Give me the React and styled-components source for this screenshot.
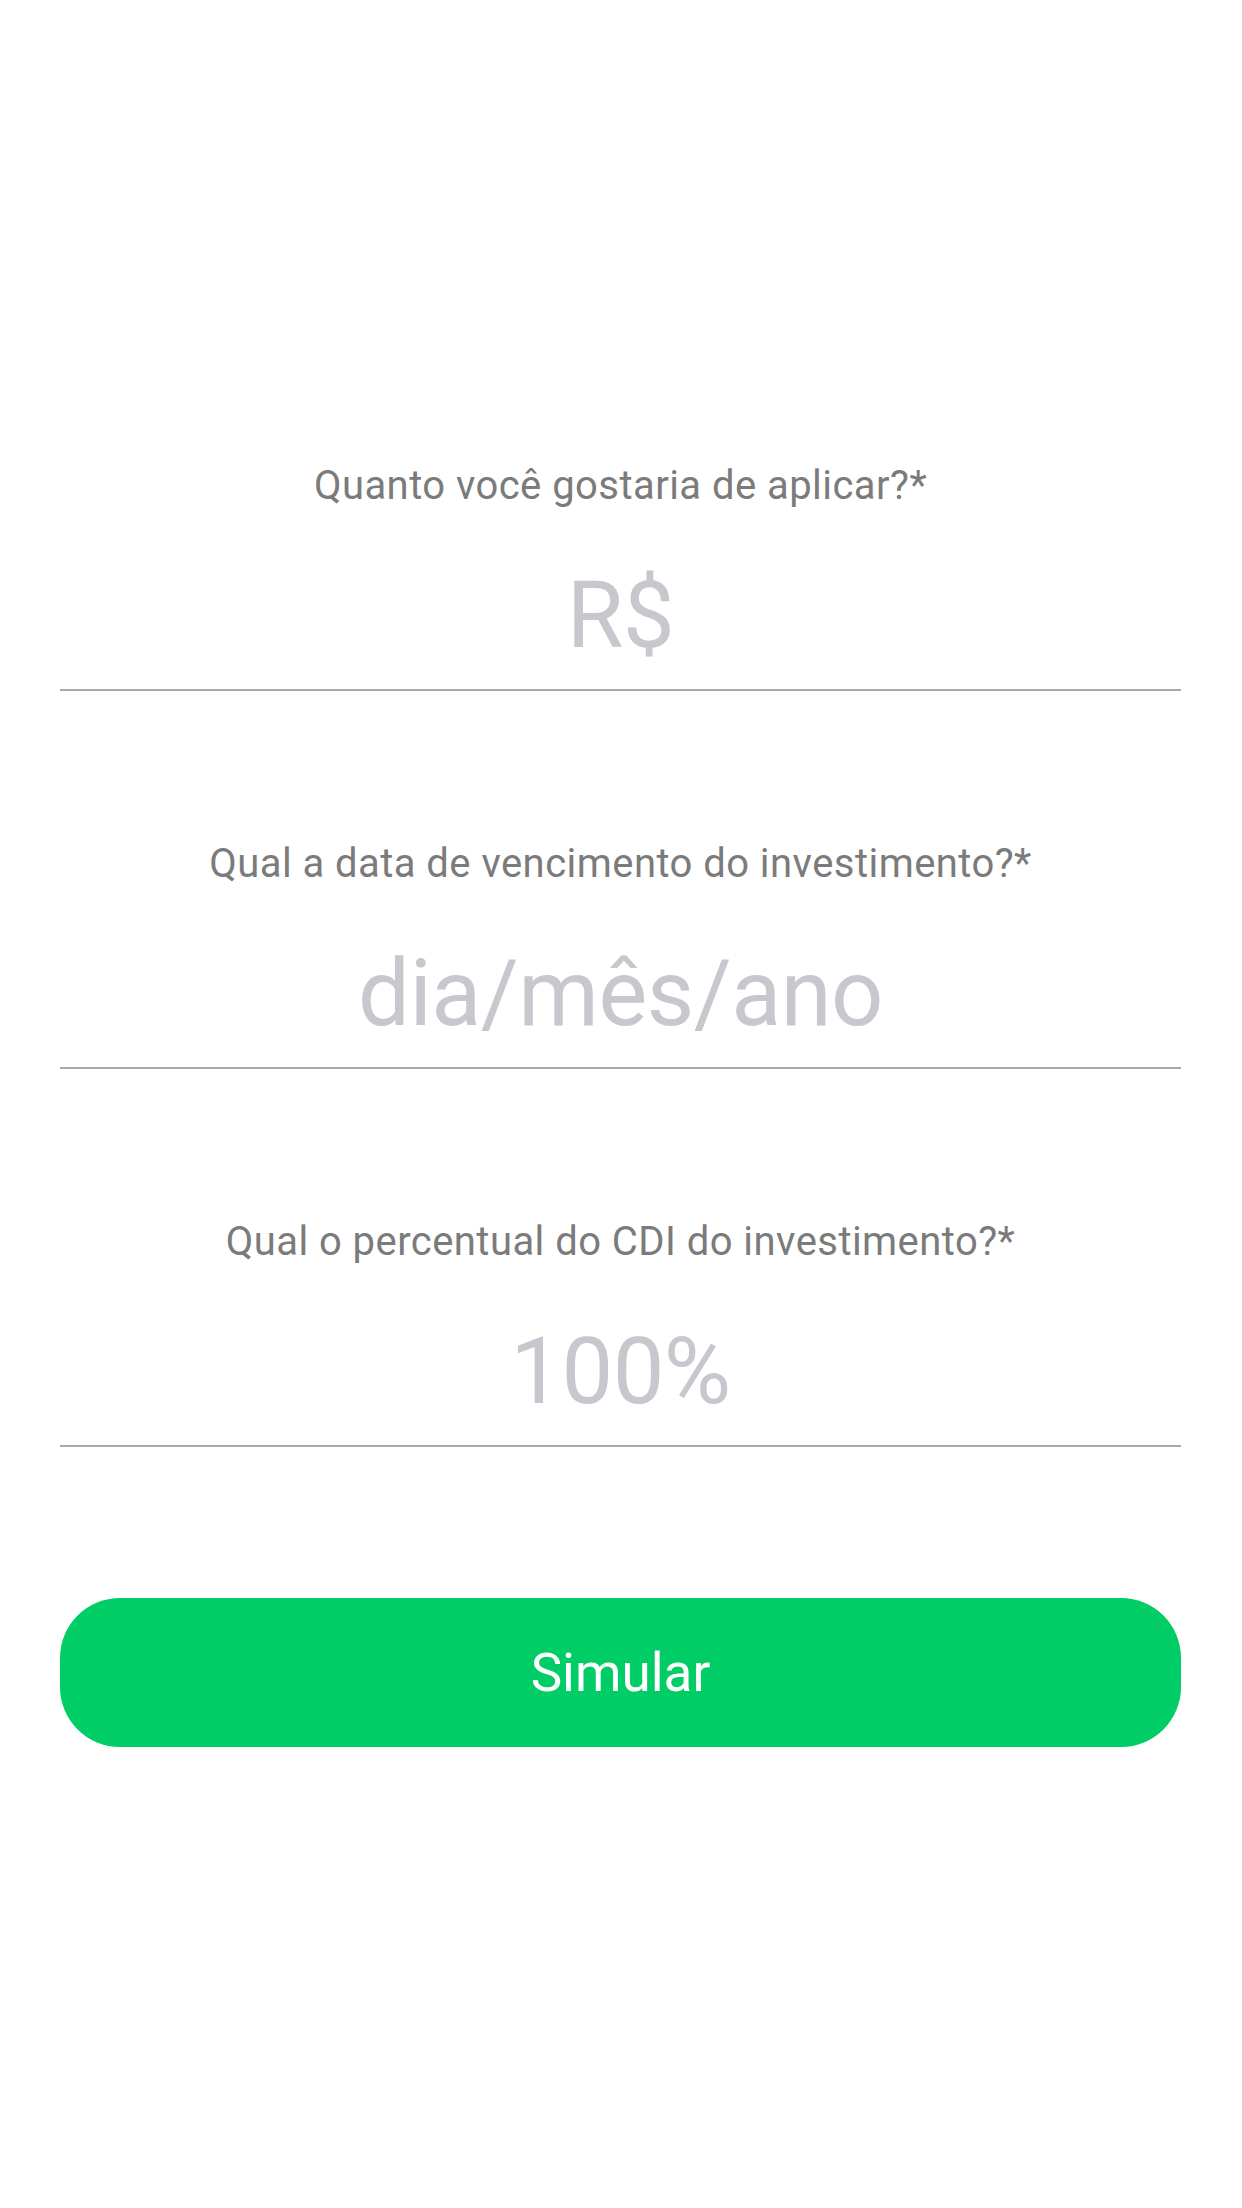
import React from "react";
import styled, { createGlobalStyle } from "styled-components";

const GlobalStyle = createGlobalStyle`
    html, body {
        margin: 0;
        padding: 0;
        background: #ffffff;
    }
    body {
        font-family: Roboto, "Liberation Sans", sans-serif;
    }
`;

const Page = styled.main`
    display: flex;
    flex-direction: column;
    gap: 149px;
    padding: 462px 61px 0 60px;
    min-height: 2208px;
    box-sizing: border-box;
`;

const Field = styled.label`
    display: flex;
    flex-direction: column;
    align-items: stretch;
    gap: 46px;
`;

const Question = styled.span`
    font-size: 40px;
    line-height: 48px;
    letter-spacing: 0.45px;
    color: #7b7b7b;
    text-align: center;
`;

const Input = styled.input`
    box-sizing: border-box;
    width: 100%;
    height: 135px;
    padding: 0 0 15px;
    border: none;
    border-bottom: 2px solid #a9a9ab;
    outline: none;
    background: transparent;
    font-family: inherit;
    font-size: 92px;
    letter-spacing: -0.5px;
    color: #333;
    text-align: center;

    &::placeholder {
        color: #c7c7cd;
    }
`;

const SubmitButton = styled.button`
    height: 149px;
    margin-top: 2px;
    border: none;
    border-radius: 60px;
    background: #00cd65;
    color: #ffffff;
    font-family: inherit;
    font-size: 53px;
    cursor: pointer;
`;

const fields = [
    { label: "Quanto você gostaria de aplicar?*", placeholder: "R$" },
    { label: "Qual a data de vencimento do investimento?*", placeholder: "dia/mês/ano" },
    { label: "Qual o percentual do CDI do investimento?*", placeholder: "100%" },
];

export default function App() {
    return (
        <>
            <GlobalStyle />
            <Page>
                {fields.map((f) => (
                    <Field key={f.label}>
                        <Question>{f.label}</Question>
                        <Input placeholder={f.placeholder} />
                    </Field>
                ))}
                <SubmitButton>Simular</SubmitButton>
            </Page>
        </>
    );
}
